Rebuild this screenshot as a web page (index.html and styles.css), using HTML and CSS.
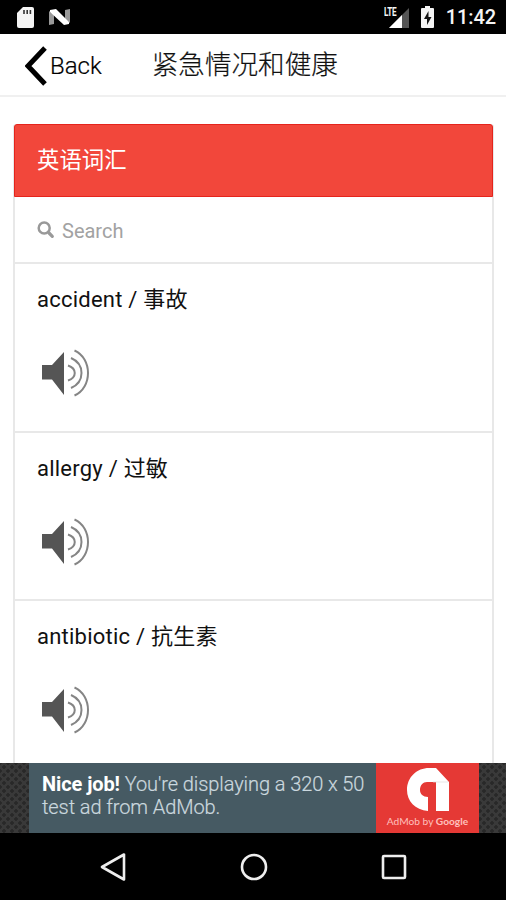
FILE: index.html
```html
<!DOCTYPE html>
<html lang="zh-CN">
<head>
<meta charset="utf-8">
<title>紧急情况和健康</title>
<link rel="stylesheet" href="styles.css">
</head>
<body>
<div class="phone">
  <div class="status">
    <svg class="sd" width="17" height="21" viewBox="0 0 17 21"><path fill="#f4f4f4" d="M6 0h9q2 0 2 2v17q0 2-2 2H2q-2 0-2-2V6z"/><path stroke="#333" stroke-width="1.600" d="M7 3v4M10.200 3v4M13.400 3v4"/></svg>
    <svg class="nougat" width="22" height="18" viewBox="0 0 22 18"><path fill="#999" d="M0 3l5 4v9l-5 1zM16 2l5-1v14l-5-4z"/><path fill="#fff" d="M1 2l6-1 13 13v2l-5 1L1 4z"/></svg>
    <div class="signal"><svg width="26" height="21" viewBox="0 0 26 21"><path fill="#555" d="M25 1v20H5z"/><path fill="#fff" d="M18 8v13H5z"/></svg><span class="lte">LTE</span></div>
    <svg class="battery" width="13" height="22" viewBox="0 0 13 22"><path fill="#f4f4f4" d="M4 0h5v2h3q1 0 1 1v18q0 1-1 1H1q-1 0-1-1V3q0-1 1-1h3z"/><path fill="#111" d="M7.500 5L3 13h3v6l4.500-8H7.500z"/></svg>
    <span class="clock">11:42</span>
  </div>
  <header class="header">
    <svg class="chevron" width="22" height="40" viewBox="0 0 22 40"><path fill="none" stroke="#000" stroke-width="5" d="M20 2L3 20l17 18"/></svg>
    <span class="back">Back</span>
    <h1 class="title">紧急情况和健康</h1>
  </header>
  <main class="content">
    <section class="card">
      <div class="card-head">英语词汇</div>
      <div class="search">
        <svg width="18" height="18" viewBox="0 0 18 18"><g fill="none" stroke="#999"><circle cx="7.200" cy="7" r="5.500" stroke-width="2.500"/><path stroke-width="3.200" stroke-linecap="round" d="M12 12l3.300 3.300"/></g></svg>
        <span class="hint">Search</span>
      </div>
      <div class="item"><div class="word">accident / 事故</div>
        <svg class="speaker" width="48" height="50" viewBox="0 0 48 50"><path fill="#555" d="M0 17h10L22 4v43L10 31.500H0z"/><g fill="none" stroke="#858585" stroke-width="2"><path d="M26 17.500c9 3 9 12 0 15"/><path d="M29 10c14 6 14 24 0 30"/><path d="M32.500 2.500c18 8 18 37 0 45"/></g></svg>
      </div>
      <div class="item"><div class="word">allergy / 过敏</div>
        <svg class="speaker" width="48" height="50" viewBox="0 0 48 50"><path fill="#555" d="M0 17h10L22 4v43L10 31.500H0z"/><g fill="none" stroke="#858585" stroke-width="2"><path d="M26 17.500c9 3 9 12 0 15"/><path d="M29 10c14 6 14 24 0 30"/><path d="M32.500 2.500c18 8 18 37 0 45"/></g></svg>
      </div>
      <div class="item"><div class="word">antibiotic / 抗生素</div>
        <svg class="speaker" width="48" height="50" viewBox="0 0 48 50"><path fill="#555" d="M0 17h10L22 4v43L10 31.500H0z"/><g fill="none" stroke="#858585" stroke-width="2"><path d="M26 17.500c9 3 9 12 0 15"/><path d="M29 10c14 6 14 24 0 30"/><path d="M32.500 2.500c18 8 18 37 0 45"/></g></svg>
      </div>
    </section>
  </main>
  <aside class="ad">
    <div class="ad-text"><b>Nice job!</b> You're displaying a 320 x 50<br>test ad from AdMob.</div>
    <div class="ad-logo">
      <svg width="44" height="43" viewBox="0 0 44 43"><path fill="#fff" d="M22 43C9 42 1 33 1 22 1 9 11 0 23 0h7l13 14v29H30V14h-9c-4 0-7 3-7 8 0 4 3 7 8 7z"/><path stroke="#ddd" stroke-width=".7" d="M27 14h15"/></svg>
      <span class="ad-brand">AdMob by <b>Google</b></span>
    </div>
  </aside>
  <nav class="nav">
    <svg width="28" height="28" viewBox="0 0 28 28"><path d="M25 1.500v25L3 14z"/></svg>
    <svg width="28" height="28" viewBox="0 0 28 28"><circle cx="14" cy="14" r="12"/></svg>
    <svg width="28" height="28" viewBox="0 0 28 28"><rect x="3" y="3" width="22" height="22" rx="1"/></svg>
  </nav>
</div>
</body>
</html>
```
FILE: styles.css
```css
* { box-sizing: border-box; }
body { margin: 0; background: #fff; color: #111; font-family: Roboto, "Noto Sans CJK SC", sans-serif; }
svg { display: block; flex: none; }
.phone { width: 506px; height: 900px; display: flex; flex-direction: column; overflow: hidden; }
.status { height: 34px; flex: none; background: #000; color: #f4f4f4; display: flex; align-items: center; padding: 0 10px 0 17px; }
.nougat { margin-left: 15px; }
.signal { position: relative; margin-left: auto; }
.lte { position: absolute; left: 0; top: -1px; font-size: 12px; line-height: 12px; font-weight: 700; letter-spacing: -0.5px; transform: scaleX(0.68); transform-origin: left; }
.battery { margin-left: 11px; }
.clock { margin-left: 12px; font-size: 20px; font-weight: 500; line-height: 35px; letter-spacing: -0.1px; }
.header { height: 63px; flex: none; display: flex; align-items: center; padding-left: 25px; border-bottom: 2px solid #f0f0f0; }
.chevron { margin-top: 3px; }
.back { margin: 2px 0 0 3px; font-size: 24px; font-weight: 300; color: #000; -webkit-text-stroke: 0.2px; }
.title { margin: 0 0 0 50px; font-size: 26.600px; font-weight: 300; line-height: 60px; -webkit-text-stroke: 0.2px; }
.content { flex: 1; min-height: 0; overflow: hidden; padding: 27px 12px 0 13px; }
.card { border: 2px solid #e8e8e8; border-top: 0; border-radius: 3px; }
.card-head { height: 73px; margin: 0 -1px; padding-left: 22px; background: #f2473b; border: 1px solid #e5241c; border-radius: 3px 3px 0 0; color: #fff; font-size: 22.400px; line-height: 71px; }
.search { height: 67px; display: flex; align-items: center; padding-left: 22px; gap: 7px; color: #a2a2a2; font-size: 20px; border-bottom: 2px solid #e8e8e8; }
.hint { padding-top: 2px; }
.item { height: 168.700px; padding: 19px 0 0 22px; border-bottom: 2px solid #e8e8e8; }
.word { height: 34px; font-size: 22px; line-height: 34px; color: #111; letter-spacing: 0.23px; }
.speaker { margin: 31px 0 0 5px; }
.ad { height: 70px; flex: none; display: flex; padding: 0 27px 0 29px; background-color: #393939; background-image: radial-gradient(circle, #282828 1.500px, transparent 2px), radial-gradient(circle, #282828 1.500px, transparent 2px); background-size: 8px 8px; background-position: 0 0, 4px 4px; }
.ad-text { width: 347px; padding: 10px 0 0 13px; background: #465a63; color: #cbd8df; font-size: 20px; line-height: 23px; font-weight: 300; letter-spacing: -0.09px; white-space: nowrap; -webkit-text-stroke: 0.2px; }
.ad-text b { color: #fff; font-weight: 700; -webkit-text-stroke: 0; }
.ad-logo { width: 103px; background: #e53935; color: #ffc0bd; display: flex; flex-direction: column; align-items: center; padding-top: 5px; }
.ad-brand { font-family: Lato, sans-serif; font-size: 10.200px; line-height: 20px; white-space: nowrap; }
.nav { height: 67px; flex: none; background: #000; display: flex; justify-content: center; align-items: center; gap: 112.500px; padding-left: 1px; }
.nav svg { fill: none; stroke: #eee; stroke-width: 2.600; stroke-linejoin: round; }
```
